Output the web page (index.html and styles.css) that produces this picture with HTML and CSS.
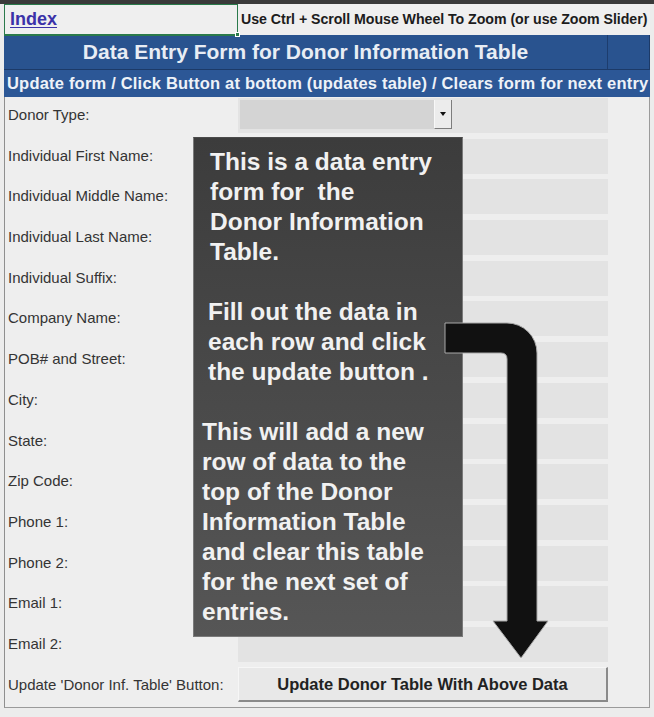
FILE: index.html
```html
<!DOCTYPE html>
<html>
<head>
<meta charset="utf-8">
<link rel="stylesheet" href="styles.css">
</head>
<body>
<div class="topstrip"></div>
<div class="sheet">
  <div class="header">
    <div class="index-cell"><a class="index-link">Index</a><span class="handle"></span></div>
    <div class="hint">Use Ctrl + Scroll Mouse Wheel To Zoom (or use Zoom Slider)</div>
  </div>
  <div class="title-bar">
    <div class="title">Data Entry Form for Donor Information Table</div>
    <div class="title-rest"></div>
  </div>
  <div class="sub-bar">Update form / Click Button at bottom (updates table) / Clears form for next entry</div>
  <div class="form">
    <div class="row"><div class="label">Donor Type:</div><div class="field combo-cell"><div class="combo"><span class="combo-btn"><span class="tri"></span></span></div></div></div>
    <div class="row"><div class="label">Individual First Name:</div><div class="field"></div></div>
    <div class="row"><div class="label">Individual Middle Name:</div><div class="field"></div></div>
    <div class="row"><div class="label">Individual Last Name:</div><div class="field"></div></div>
    <div class="row"><div class="label">Individual Suffix:</div><div class="field"></div></div>
    <div class="row"><div class="label">Company Name:</div><div class="field"></div></div>
    <div class="row"><div class="label">POB# and Street:</div><div class="field"></div></div>
    <div class="row"><div class="label">City:</div><div class="field"></div></div>
    <div class="row"><div class="label">State:</div><div class="field"></div></div>
    <div class="row"><div class="label">Zip Code:</div><div class="field"></div></div>
    <div class="row"><div class="label">Phone 1:</div><div class="field"></div></div>
    <div class="row"><div class="label">Phone 2:</div><div class="field"></div></div>
    <div class="row"><div class="label">Email 1:</div><div class="field"></div></div>
    <div class="row"><div class="label">Email 2:</div><div class="field"></div></div>
    <div class="row"><div class="label">Update 'Donor Inf. Table' Button:</div><div class="update-btn">Update Donor Table With Above Data</div></div>
  </div>
</div>

<div class="note">
  <p class="p1">This is a data entry<br>form for&nbsp; the<br>Donor Information<br>Table.</p>
  <p class="p2">Fill out the data in<br>each row and click<br>the update button .</p>
  <p class="p3">This will add a new<br>row of data to the<br>top of the Donor<br>Information Table<br>and clear this table<br>for the next set of<br>entries.</p>
</div>

<svg class="arrow" width="654" height="717" viewBox="0 0 654 717">
  <path d="M445,323 H507 A30,30 0 0 1 537,353 V621 H548 L521,658 L493,621 H507 V359 Q507,353 501,353 H445 Z" fill="#111111" stroke="#a9a9a9" stroke-width="1"/>
</svg>
</body>
</html>
```

FILE: styles.css
```css
* { box-sizing: border-box; }
html, body { margin: 0; padding: 0; }
body {
  width: 654px;
  height: 717px;
  background: #ececec;
  font-family: "Liberation Sans", Arial, sans-serif;
  position: relative;
  overflow: hidden;
}
.topstrip {
  height: 4px;
  background: #3a3a3a;
}
.sheet {
  margin-left: 4px;
  width: 646px;
}
.header {
  display: flex;
  height: 31px;
  background: #efefef;
}
.index-cell {
  position: relative;
  width: 234px;
  height: 32px;
  border: 1px solid #2a7a4b;
  border-bottom: 2px solid #2a7a4b;
  padding-left: 5px;
  display: flex;
  align-items: center;
  z-index: 2;
}
.index-link {
  font-size: 18px;
  font-weight: bold;
  color: #3b32a8;
  text-decoration: underline;
  text-underline-offset: 2px;
}
.handle {
  position: absolute;
  right: -3px;
  bottom: -3px;
  width: 5px;
  height: 5px;
  background: #2a7a4b;
  border: 1px solid #fff;
}
.hint {
  flex: 1;
  padding-left: 3px;
  font-size: 14.2px;
  font-weight: bold;
  color: #1c1c1c;
  line-height: 31px;
  letter-spacing: -0.05px;
  white-space: nowrap;
}
.title-bar {
  display: flex;
  height: 35px;
  background: #29538f;
  border-bottom: 1px solid #1c3a68;
  border-right: 1px solid #1c3a68;
}
.title {
  width: 604px;
  border-right: 1px solid #1d3d6e;
  text-align: center;
  font-size: 21px;
  font-weight: bold;
  color: #e8edf4;
  line-height: 34px;
  white-space: nowrap;
}
.title-rest { flex: 1; }
.sub-bar {
  height: 27px;
  background: #2c5796;
  color: #eef2f8;
  font-size: 16.5px;
  font-weight: bold;
  line-height: 27px;
  padding-left: 3px;
  white-space: nowrap;
  letter-spacing: 0.2px;
  overflow: hidden;
}
.form {
  border-left: 1px solid #8f8f8f;
  border-right: 1px solid #9a9a9a;
  border-bottom: 1px solid #9a9a9a;
  background: #eeeeee;
  display: grid;
  grid-auto-rows: 40.7px;
}
.row {
  display: grid;
  grid-template-columns: 233px 370px;
  align-items: start;
}
.label {
  padding-left: 3px;
  font-size: 15px;
  color: #343434;
  line-height: 35px;
  white-space: nowrap;
}
.field {
  margin-top: 1px;
  height: 35px;
  background: #e3e3e3;
}
.combo-cell {
  padding: 2px 0 0 2px;
}
.combo {
  width: 212px;
  height: 29px;
  background: #d4d4d4;
  display: flex;
  justify-content: flex-end;
}
.combo-btn {
  width: 18px;
  height: 29px;
  background: #ececec;
  border-right: 1px solid #7d7d7d;
  border-bottom: 1px solid #7d7d7d;
  border-left: 1px solid #f8f8f8;
  display: flex;
  align-items: center;
  justify-content: center;
}
.tri {
  width: 0;
  height: 0;
  border-left: 3.5px solid transparent;
  border-right: 3.5px solid transparent;
  border-top: 4px solid #111;
}
.update-btn {
  height: 35px;
  background: #e8e8e8;
  border-top: 1px solid #f6f6f6;
  border-left: 1px solid #f6f6f6;
  border-right: 2px solid #8a8a8a;
  border-bottom: 2px solid #8a8a8a;
  text-align: center;
  font-size: 16.5px;
  font-weight: bold;
  color: #222;
  line-height: 32px;
  white-space: nowrap;
}
.note {
  position: absolute;
  left: 193px;
  top: 137px;
  width: 270px;
  height: 500px;
  background: linear-gradient(#3c3c3c, #565656);
  border: 1px solid #7a7a7a;
  border-top-color: #4a4a4a;
  padding-top: 9px;
  color: #f1f1f1;
  font-family: "Liberation Sans", Arial, sans-serif;
  font-weight: bold;
  font-size: 24.5px;
  line-height: 30px;
  white-space: nowrap;
}
.note p { margin: 0 0 30px 0; }
.note .p1 { padding-left: 16px; }
.note .p2 { padding-left: 14px; }
.note .p3 { padding-left: 8px; }
.arrow {
  position: absolute;
  left: 0;
  top: 0;
}
```
